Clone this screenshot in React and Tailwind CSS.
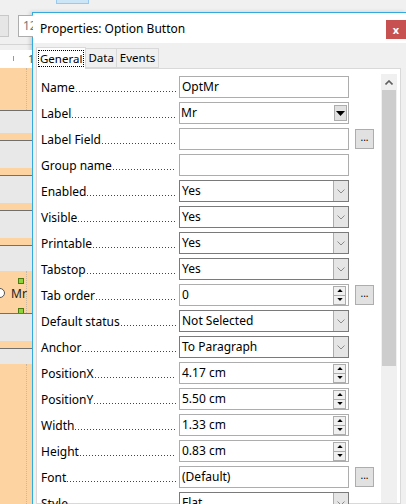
const rows = [
  { label: 'Name', kind: 'text', value: 'OptMr' },
  { label: 'Label', kind: 'list', value: 'Mr' },
  { label: 'Label Field', kind: 'text', value: '', more: true },
  { label: 'Group name', kind: 'text', value: '' },
  { label: 'Enabled', kind: 'combo', value: 'Yes' },
  { label: 'Visible', kind: 'combo', value: 'Yes' },
  { label: 'Printable', kind: 'combo', value: 'Yes' },
  { label: 'Tabstop', kind: 'combo', value: 'Yes' },
  { label: 'Tab order', kind: 'spin', value: '0', more: true },
  { label: 'Default status', kind: 'combo', value: 'Not Selected' },
  { label: 'Anchor', kind: 'combo', value: 'To Paragraph' },
  { label: 'PositionX', kind: 'spin', value: '4.17 cm' },
  { label: 'PositionY', kind: 'spin', value: '5.50 cm' },
  { label: 'Width', kind: 'spin', value: '1.33 cm' },
  { label: 'Height', kind: 'spin', value: '0.83 cm' },
  { label: 'Font', kind: 'text', value: '(Default)', more: true },
  { label: 'Style', kind: 'combo', value: 'Flat' },
];

// background strips of the document behind the dialog
const bands = [
  { h: 42, kind: 'orange' },
  { h: 1, kind: 'line' },
  { h: 22, kind: 'gray' },
  { h: 7, kind: 'orange' },
  { h: 1, kind: 'line' },
  { h: 27, kind: 'gray' },
  { h: 7, kind: 'orange' },
  { h: 1, kind: 'line' },
  { h: 27, kind: 'gray' },
  { h: 7, kind: 'orange' },
  { h: 1, kind: 'line' },
  { h: 27, kind: 'gray' },
  { h: 7, kind: 'orange' },
  { h: 1, kind: 'line' },
  { h: 25, kind: 'gray' },
  { h: 42, kind: 'control' },
  { h: 1, kind: 'line' },
  { h: 27, kind: 'gray' },
  { h: 7, kind: 'orange' },
  { h: 1, kind: 'line' },
  { h: 15, kind: 'gray' },
  { h: 140, kind: 'orange' },
];

const bandClass = {
  orange: 'bg-[#fdd3a1]',
  line: 'bg-[#707070]',
  gray: 'bg-[#e8e8e8]',
  control: 'bg-[#fdd3a1]',
};

function Band({ h, kind }) {
  return (
    <div className={`relative shrink-0 ${bandClass[kind]}`} style={{ height: h }}>
      {(kind === 'orange' || kind === 'control') && h > 20 && (
        <div className="absolute left-[26px] top-0 bottom-0 border-l border-dotted border-[#c9b8a4]" />
      )}
      {kind === 'control' && (
        <>
          <div className="absolute left-[18px] top-[7px] w-[6px] h-[6px] bg-[#8cd43a] border border-[#4a7a10]" />
          <div className="absolute left-[18px] top-[37px] w-[6px] h-[6px] bg-[#8cd43a] border border-[#4a7a10]" />
          <div className="absolute -left-[5px] top-[17px] w-[10px] h-[10px] rounded-full bg-white border border-[#555]" />
          <div className="absolute left-[11px] top-[14px] text-[12px] text-[#222]">Mr</div>
        </>
      )}
    </div>
  );
}

function DownTri({ className = '' }) {
  return (
    <svg width="9" height="5" viewBox="0 0 9 5" className={className}>
      <path d="M0 0h9L4.5 5z" fill="#000" />
    </svg>
  );
}

function Chevron() {
  return (
    <svg width="8" height="5" viewBox="0 0 8 5">
      <path d="M0.5 0.5L4 4L7.5 0.5" fill="none" stroke="#8a8a8a" strokeWidth="1" />
    </svg>
  );
}

function Field({ row }) {
  if (row.kind === 'list') {
    return (
      <div className="w-[170px] h-[22px] border border-[#adadad] bg-white flex items-center">
        <span className="flex-1 pl-[1px]">{row.value}</span>
        <div className="w-[13px] h-[16px] mr-[1px] bg-[#e1e1e1] border border-[#adadad] flex items-center justify-center">
          <DownTri />
        </div>
      </div>
    );
  }
  if (row.kind === 'combo') {
    return (
      <div className="w-[170px] h-[22px] border border-[#7a7a7a] bg-white flex items-stretch">
        <span className="flex-1 pl-[2px] flex items-center">{row.value}</span>
        <div className="w-[15px] bg-[#e5e5e5] border-l border-[#adadad] flex items-center justify-center">
          <Chevron />
        </div>
      </div>
    );
  }
  if (row.kind === 'spin') {
    return (
      <div className="w-[170px] h-[22px] border border-[#adadad] bg-white flex items-center">
        <span className="flex-1 pl-[2px]">{row.value}</span>
        <div className="w-[13px] h-[19px] mr-[2px] flex flex-col border border-[#adadad] bg-[#f0f0f0]">
          <div className="flex-1 flex items-center justify-center border-b border-[#adadad]">
            <DownTri className="rotate-180 w-[6px] h-[3px]" />
          </div>
          <div className="flex-1 flex items-center justify-center">
            <DownTri className="w-[6px] h-[3px]" />
          </div>
        </div>
      </div>
    );
  }
  return (
    <div className="w-[170px] h-[22px] border border-[#adadad] bg-white flex items-center">
      <span className="pl-[2px]">{row.value}</span>
    </div>
  );
}

export default function App() {
  return (
    <div
      className="w-[406px] h-[504px] overflow-hidden bg-[#f0f0f0] flex flex-col text-[12px] text-black"
      style={{ fontFamily: '"Noto Sans", "Open Sans", sans-serif' }}
    >
      {/* strip above dialog */}
      <div className="h-[12px] shrink-0 relative">
        <div className="absolute left-[56px] top-0 w-[33px] h-[4px] bg-[#cde6f7] border border-[#99c9ef] border-t-0" />
      </div>

      <div className="flex flex-1 min-h-0">
        {/* document behind */}
        <div className="w-[32px] shrink-0 flex flex-col">
          <div className="h-[32px] shrink-0 relative">
            <div className="absolute left-0 top-[3px] w-[9px] h-[22px] bg-[#e6e6e6] border border-[#c8c8c8] border-l-0" />
            <div className="absolute left-[18px] top-[3px] w-[20px] h-[22px] bg-white border border-[#adadad] text-[#777] pl-[4px] leading-[20px]">
              12
            </div>
          </div>
          <div className="h-[1px] shrink-0 bg-[#d5d5d5]" />
          <div className="h-[5px] shrink-0" />
          <div className="h-[18px] shrink-0 bg-white relative">
            <div className="absolute left-[13px] top-[6px] w-[1px] h-[5px] bg-[#999]" />
            <div className="absolute left-[28px] top-[1px] text-[11px] text-[#555]">1</div>
          </div>
          {bands.map((b, i) => (
            <Band key={i} {...b} />
          ))}
        </div>

        {/* dialog */}
        <div className="flex-1 flex flex-col border-t border-[#33aadd] border-l border-[#9c9c9c] shadow-[-2px_0_4px_rgba(0,0,0,0.15)] min-w-0">
          <div className="h-[30px] shrink-0 bg-white flex items-center pl-[7px] pt-[2px] relative">
            <span className="text-[12px]">Properties: Option Button</span>
            <div className="absolute right-0 top-[7px] w-[20px] h-[19px] bg-[#c75050] flex items-center justify-center text-white text-[11px] font-bold leading-none">
              x
            </div>
          </div>

          <div className="flex-1 bg-[#f0f0f0] pl-[3px] pr-[5px] pt-[3px] flex flex-col min-h-0">
            <div className="flex items-end h-[22px] shrink-0 text-[11.5px]">
              <div className="h-[22px] px-[2px] bg-white border border-[#d9d9d9] border-b-0 flex items-center justify-center relative z-10 -mb-px">
                <span className="outline outline-1 outline-dotted outline-black px-[1px] leading-[15px]">General</span>
              </div>
              <div className="h-[20px] px-[2px] bg-[#f0f0f0] border border-[#d9d9d9] border-l-0 flex items-center justify-center">Data</div>
              <div className="h-[20px] px-[3px] bg-[#f0f0f0] border border-[#d9d9d9] border-l-0 flex items-center justify-center">Events</div>
            </div>

            <div className="flex-1 bg-white border border-[#d9d9d9] flex min-h-0">
              <div className="flex-1 pl-[4px] pt-[7px] flex flex-col gap-[4px]">
                {rows.map((r) => (
                  <div key={r.label} className="h-[22px] flex items-center">
                    <div className="w-[135px] shrink-0 flex items-end pt-[2px]">
                      <span className="whitespace-nowrap">{r.label}</span>
                      <div className="flex-1 h-[1px] mb-[5px] ml-[1px] bg-[linear-gradient(to_right,#444_1px,transparent_1px)] bg-[length:3px_1px] bg-repeat-x" />
                    </div>
                    <div className="ml-[3px]">
                      <Field row={r} />
                    </div>
                    {r.more && (
                      <div className="ml-[6px] w-[19px] h-[20px] bg-[#e1e1e1] border border-[#adadad] flex items-center justify-center text-[10px] leading-none pb-[4px]">
                        ...
                      </div>
                    )}
                  </div>
                ))}
              </div>
              <div className="w-[16px] mt-[5px] mr-[3px] flex flex-col bg-[#f0f0f0]">
                <div className="h-[16px] flex items-center justify-center">
                  <svg width="8" height="5" viewBox="0 0 8 5">
                    <path d="M0.5 4.5L4 1L7.5 4.5" fill="none" stroke="#606060" strokeWidth="1.6" />
                  </svg>
                </div>
                <div className="h-[276px] mx-[1px] bg-[#cdcdcd]" />
              </div>
            </div>
          </div>
        </div>
      </div>
    </div>
  );
}
